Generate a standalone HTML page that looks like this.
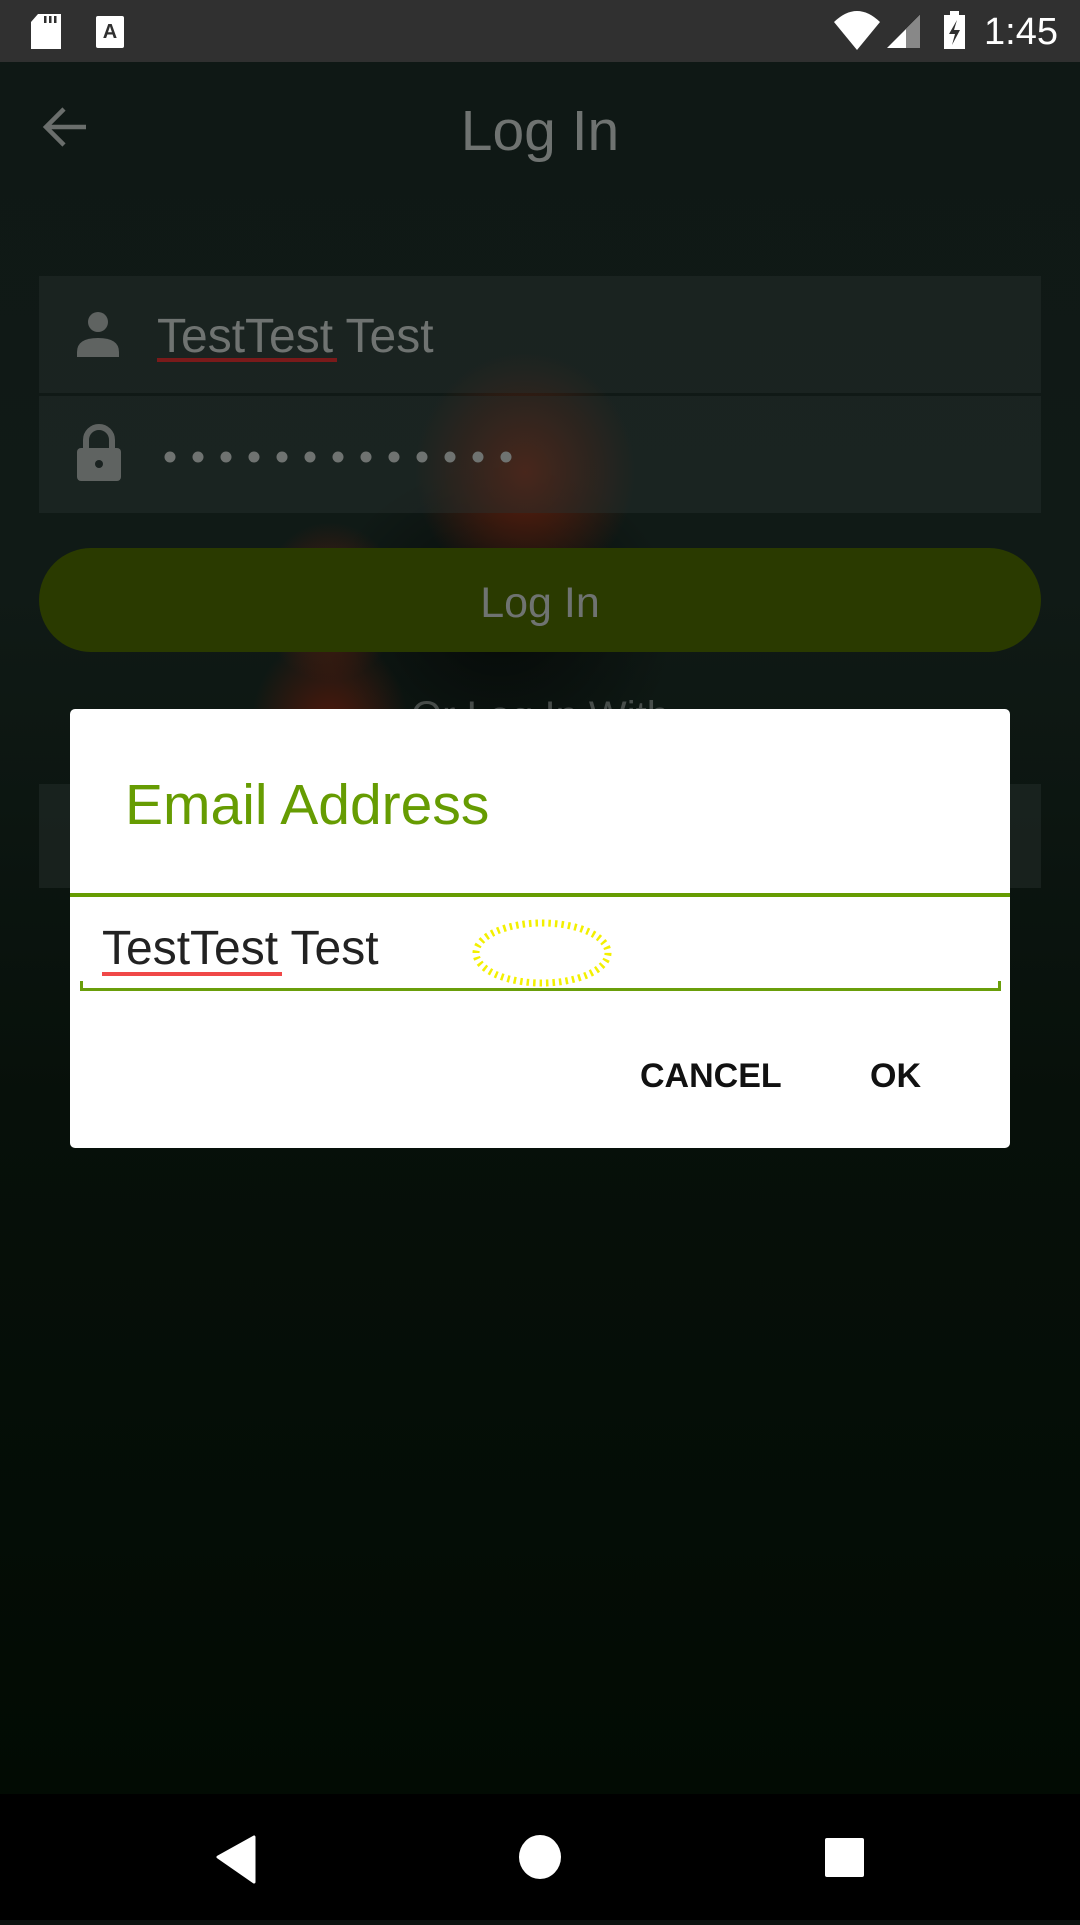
<!DOCTYPE html>
<html><head><meta charset="utf-8"><style>
*{margin:0;padding:0;box-sizing:border-box}
body{width:1080px;height:1920px;overflow:hidden;position:relative;font-family:"Liberation Sans",sans-serif;background:#0b120f}
.bg{position:absolute;left:0;top:62px;width:1080px;height:1733px;
background:
radial-gradient(ellipse 110px 120px at 525px 410px,rgba(120,32,10,.8),rgba(110,30,10,0) 100%),
radial-gradient(ellipse 70px 80px at 330px 540px,rgba(120,30,10,.65),rgba(0,0,0,0) 100%),
radial-gradient(ellipse 80px 100px at 330px 670px,rgba(110,25,8,.7),rgba(0,0,0,0) 100%),
radial-gradient(ellipse 180px 160px at 500px 560px,rgba(0,0,0,.6),rgba(0,0,0,0) 100%),
linear-gradient(180deg,#0f1815 0%,#101a16 30%,#07100a 60%,#020b03 100%);}
.sb{position:absolute;left:0;top:0;width:1080px;height:62px;background:#303030}
.field{position:absolute;left:39px;width:1002px;background:rgba(40,48,46,.45)}
.gray{color:#6f7371}
</style></head><body>
<div class="bg"></div>
<div class="sb">
 <svg width="1080" height="62" style="position:absolute;left:0;top:0">
  <path d="M38 14h23v35h-30v-27z" fill="#fff"/>
  <rect x="44" y="16" width="2.5" height="7" fill="#303030"/><rect x="49" y="16" width="2.5" height="7" fill="#303030"/><rect x="54" y="16" width="2.5" height="7" fill="#303030"/>
  <rect x="96" y="16" width="28" height="32" rx="2" fill="#fff"/>
  <text x="110" y="38" font-size="20" font-weight="bold" text-anchor="middle" fill="#303030" font-family="Liberation Sans">A</text>
  <path d="M834 22 Q857 0 880 22 L857 50z" fill="#fff"/>
  <path d="M887 48 L920 15 V48z" fill="#fff"/><path d="M906 29 L920 15 V48 H906z" fill="#888"/>
  <rect x="944" y="15" width="21" height="34" fill="#fff"/><rect x="950" y="11" width="9" height="5" fill="#fff"/>
  <path d="M957 20 L949 34 H955 L952 45 L960 30 H954z" fill="#303030"/>
  <text x="1058" y="44" font-size="38" fill="#fff" text-anchor="end" font-family="Liberation Sans">1:45</text>
 </svg>
</div>
<svg style="position:absolute;left:40px;top:104px" width="50" height="46"><path d="M46 23H6M24 5L6 23 24 41" stroke="#6a6e6c" stroke-width="4.5" fill="none"/></svg>
<div class="gray" style="position:absolute;left:0;width:1080px;top:98px;text-align:center;font-size:57px">Log In</div>
<div class="field" style="top:276px;height:117px"></div>
<div class="field" style="top:396px;height:117px"></div>
<svg style="position:absolute;left:76px;top:310px" width="46" height="48"><circle cx="22" cy="12" r="10" fill="#5f6361"/><path d="M1 42 Q1 28 22 28 Q43 28 43 42 V47 H1z" fill="#5f6361"/></svg>
<div class="gray" style="position:absolute;left:157px;top:309px;font-size:48px">TestTest Test</div>
<div style="position:absolute;left:157px;top:358px;width:180px;height:4px;background:#7a1a1a"></div>
<svg style="position:absolute;left:76px;top:424px" width="46" height="58"><path d="M10 24V16a13 13 0 0 1 26 0v8" stroke="#5f6361" stroke-width="6" fill="none"/><rect x="1" y="24" width="44" height="33" rx="4" fill="#5f6361"/><circle cx="23" cy="40" r="4" fill="#1a2220"/></svg>
<div style="position:absolute;left:162px;top:450px">
 <svg width="360" height="14"><g fill="#6f7371">
 <circle cx="8" cy="7" r="5.5"/><circle cx="36" cy="7" r="5.5"/><circle cx="64" cy="7" r="5.5"/><circle cx="92" cy="7" r="5.5"/><circle cx="120" cy="7" r="5.5"/><circle cx="148" cy="7" r="5.5"/><circle cx="176" cy="7" r="5.5"/><circle cx="204" cy="7" r="5.5"/><circle cx="232" cy="7" r="5.5"/><circle cx="260" cy="7" r="5.5"/><circle cx="288" cy="7" r="5.5"/><circle cx="316" cy="7" r="5.5"/><circle cx="344" cy="7" r="5.5"/></g></svg>
</div>
<div style="position:absolute;left:39px;top:548px;width:1002px;height:104px;border-radius:52px;background:#2a3a00"></div>
<div class="gray" style="position:absolute;left:0;width:1080px;top:579px;text-align:center;font-size:43px">Log In</div>
<div class="gray" style="position:absolute;left:0;width:1080px;top:694px;text-align:center;font-size:40px;opacity:.6">Or Log In With</div>
<div class="field" style="top:784px;height:104px"></div>
<!-- dialog -->
<div style="position:absolute;left:70px;top:709px;width:940px;height:439px;background:#fff;border-radius:5px;overflow:hidden">
 <div style="position:absolute;left:55px;top:63px;font-size:57px;color:#669c02">Email Address</div>
 <div style="position:absolute;left:0;top:184px;width:940px;height:4px;background:#669c02"></div>
 <div style="position:absolute;left:32px;top:212px;font-size:48px;color:#222">TestTest Test</div>
 <div style="position:absolute;left:32px;top:263px;width:180px;height:4px;background:#f04848"></div>
 <svg style="position:absolute;left:400px;top:206px" width="145" height="76"><ellipse cx="72" cy="38" rx="66" ry="30" fill="none" stroke="#f3f000" stroke-width="7" stroke-dasharray="2.5 4"/></svg>
 <div style="position:absolute;left:10px;top:272px;width:921px;height:10px;border:3px solid #6a9e0a;border-top:none"></div>
 <div style="position:absolute;left:570px;top:348px;font-size:34px;font-weight:bold;color:#111">CANCEL</div>
 <div style="position:absolute;left:800px;top:348px;font-size:34px;font-weight:bold;color:#111">OK</div>
</div>
<!-- nav -->
<div style="position:absolute;left:0;top:1794px;width:1080px;height:126px;background:#000">
 <svg width="1080" height="126"><path d="M254 43V88L218 63z" fill="#fff" stroke="#fff" stroke-width="3" stroke-linejoin="round"/>
 <ellipse cx="540" cy="63" rx="21" ry="22" fill="#fff"/>
 <rect x="825" y="44" width="39" height="39" rx="2" fill="#fff"/></svg>
</div>
</body></html>
